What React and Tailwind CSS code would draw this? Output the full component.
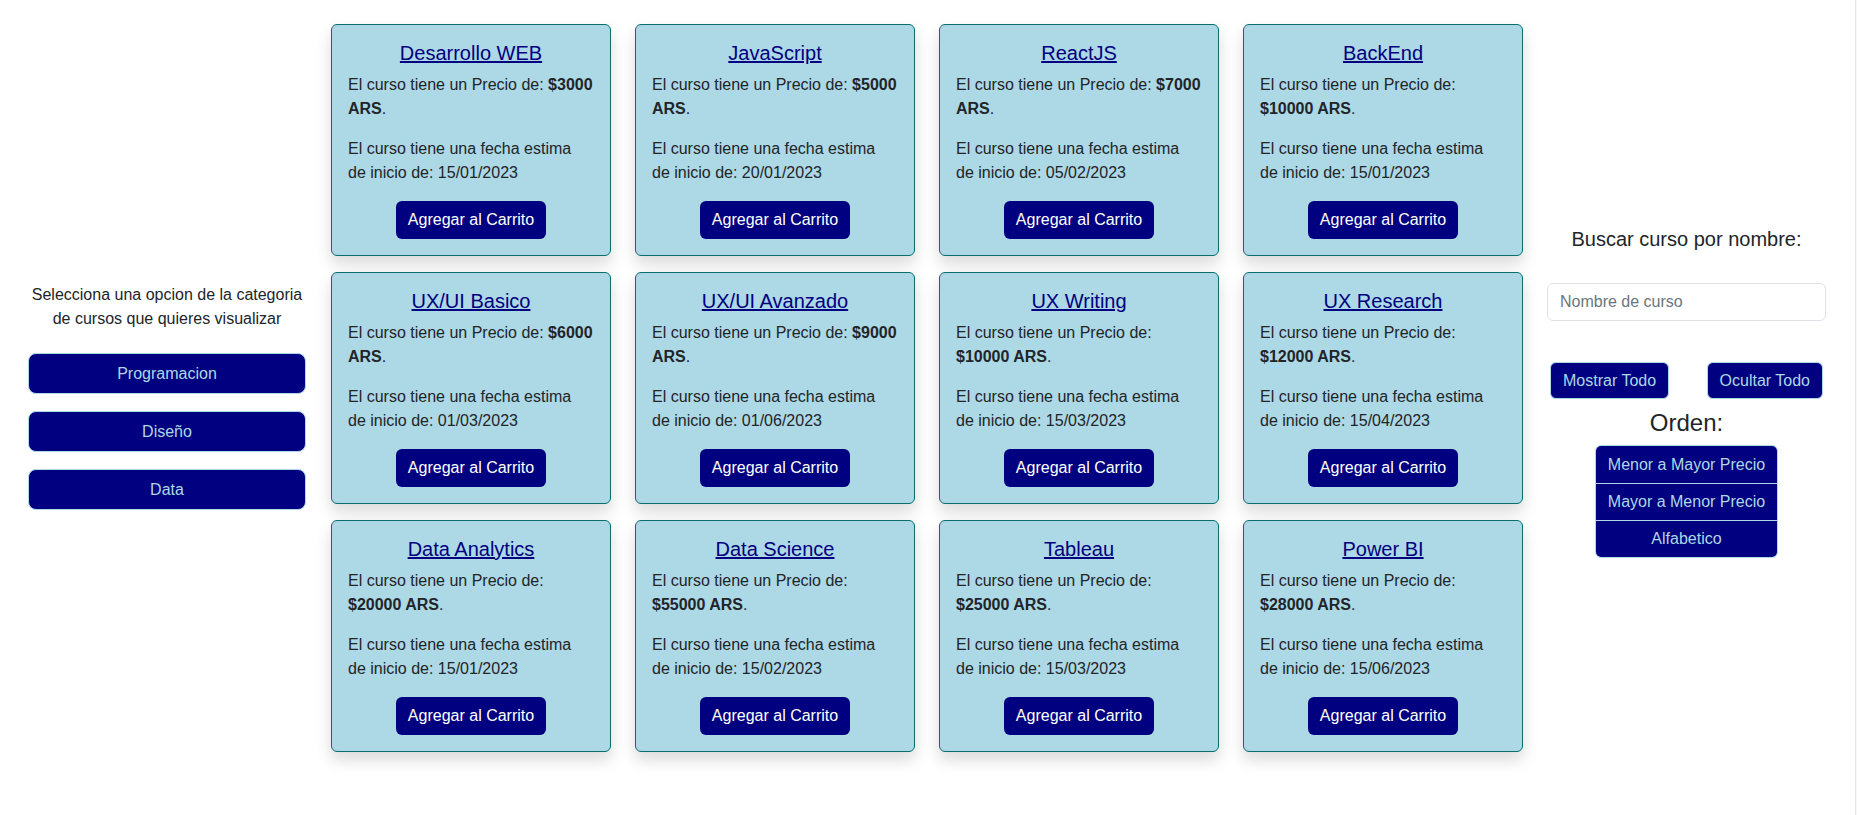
import React from "react";

const cursos = [
  { nombre: "Desarrollo WEB", precio: 3000, fecha: "15/01/2023" },
  { nombre: "JavaScript", precio: 5000, fecha: "20/01/2023" },
  { nombre: "ReactJS", precio: 7000, fecha: "05/02/2023" },
  { nombre: "BackEnd", precio: 10000, fecha: "15/01/2023" },
  { nombre: "UX/UI Basico", precio: 6000, fecha: "01/03/2023" },
  { nombre: "UX/UI Avanzado", precio: 9000, fecha: "01/06/2023" },
  { nombre: "UX Writing", precio: 10000, fecha: "15/03/2023" },
  { nombre: "UX Research", precio: 12000, fecha: "15/04/2023" },
  { nombre: "Data Analytics", precio: 20000, fecha: "15/01/2023" },
  { nombre: "Data Science", precio: 55000, fecha: "15/02/2023" },
  { nombre: "Tableau", precio: 25000, fecha: "15/03/2023" },
  { nombre: "Power BI", precio: 28000, fecha: "15/06/2023" },
];

function CursoCard({ curso }) {
  return (
    <div className="h-[232px] w-[280px] rounded-[6px] border border-[#0b6e6e] bg-[#add8e6] p-4 text-center shadow-[0_8px_16px_rgba(0,0,0,0.15)]">
      <h5 className="mb-2 text-[20px] leading-6">
        <a href="#" className="text-[#000080] underline">
          {curso.nombre}
        </a>
      </h5>
      <p className="mb-4 text-left text-[16px] leading-6 text-[#212529]">
        El curso tiene un Precio de: <b>${curso.precio} ARS</b>.
      </p>
      <p className="mb-4 text-left text-[16px] leading-6 text-[#212529]">
        El curso tiene una fecha estima
        <br />
        de inicio de: {curso.fecha}
      </p>
      <button className="h-[38px] rounded-[6px] bg-[#000080] px-3 text-[16px] leading-6 text-white">
        Agregar al Carrito
      </button>
    </div>
  );
}

export default function App() {
  return (
    <div className="flex min-h-[815px] bg-white font-['Liberation_Sans',sans-serif] text-[#212529]">
      {/* categorias */}
      <div className="w-[331px] shrink-0 pl-[28px] pt-[283px]">
        <div className="w-[278px]">
          <p className="text-center text-[16px] leading-6">
            Selecciona una opcion de la categoria de cursos que quieres visualizar
          </p>
          <div className="mt-[22px] flex flex-col gap-[17px]">
            {["Programacion", "Diseño", "Data"].map((c) => (
              <button
                key={c}
                className="h-[41px] w-full rounded-[8px] border border-[#add8e6] bg-[#000080] text-[16px] text-[#add8e6]"
              >
                {c}
              </button>
            ))}
          </div>
        </div>
      </div>

      {/* cursos */}
      <div className="grid grid-cols-[repeat(4,280px)] content-start gap-x-6 gap-y-4 pt-6">
        {cursos.map((c) => (
          <CursoCard key={c.nombre} curso={c} />
        ))}
      </div>

      {/* busqueda y orden */}
      <div className="flex w-[327px] shrink-0 flex-col items-center pt-[227px]">
        <p className="text-[20px] leading-6">Buscar curso por nombre:</p>
        <input
          type="text"
          placeholder="Nombre de curso"
          className="mt-8 h-[38px] w-[279px] rounded-[6px] border border-[#dee2e6] bg-white px-3 text-[16px] text-[#212529] placeholder:text-[#6c757d] outline-none"
        />
        <div className="mt-[41px] flex w-[279px] justify-between px-[3px]">
          <button className="h-[37px] rounded-[6px] border border-[#add8e6] bg-[#000080] px-3 text-[16px] text-[#add8e6]">
            Mostrar Todo
          </button>
          <button className="h-[37px] rounded-[6px] border border-[#add8e6] bg-[#000080] px-3 text-[16px] text-[#add8e6]">
            Ocultar Todo
          </button>
        </div>
        <h4 className="mt-[9px] text-[24px] leading-[29px]">Orden:</h4>
        <div className="mt-2 flex flex-col overflow-hidden rounded-[6px] border border-[#add8e6]">
          {["Menor a Mayor Precio", "Mayor a Menor Precio", "Alfabetico"].map((o, i) => (
            <button
              key={o}
              className={
                i === 0
                  ? "h-[37px] bg-[#000080] px-3 text-[16px] text-[#add8e6]"
                  : "h-[37px] border-t border-[#add8e6] bg-[#000080] px-3 text-[16px] text-[#add8e6]"
              }
            >
              {o}
            </button>
          ))}
        </div>
      </div>

      <div className="ml-auto w-[2px] shrink-0 border-l border-[#e6e6e6] bg-[#f8f8f8]" />
    </div>
  );
}
